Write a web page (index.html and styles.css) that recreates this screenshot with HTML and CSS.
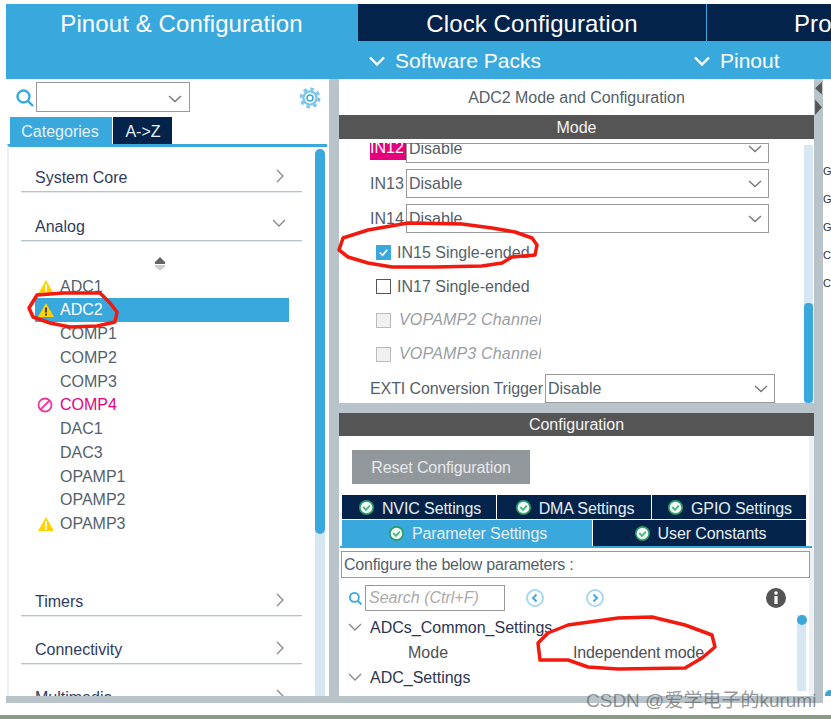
FILE: index.html
```html
<!DOCTYPE html>
<html lang="en">
<head>
<meta charset="utf-8">
<title>ADC2 Mode and Configuration</title>
<link rel="stylesheet" href="styles.css">
</head>
<body>
<div class="app">
  <header class="head">
    <nav class="main-tabs">
      <div class="main-tab t1 on">Pinout &amp; Configuration</div>
      <div class="main-tab t2">Clock Configuration</div>
      <div class="main-tab t3">Proj</div>
    </nav>
    <div class="sub-bar">
      <div class="sub s1"><svg class="sub-i" viewBox="0 0 16 10"><path d="M1 1.5l7 7 7-7"/></svg>Software Packs</div>
      <div class="sub s2"><svg class="sub-i" viewBox="0 0 16 10"><path d="M1 1.5l7 7 7-7"/></svg>Pinout</div>
    </div>
  </header>
  <div class="work">
    <aside class="left">
      <div class="finder">
        <svg class="lens" viewBox="0 0 20 20"><circle cx="8.5" cy="8.5" r="6"/><path d="M13 13l5 5"/></svg>
        <div class="combo"><svg class="chev" viewBox="0 0 14 8"><path d="M1 1l6 5.5L13 1"/></svg></div>
        <svg class="gear" viewBox="0 0 22 22"><circle class="g1" cx="11" cy="11" r="9"/><circle class="g2" cx="11" cy="11" r="6.6"/><circle class="g3" cx="11" cy="11" r="3"/></svg>
      </div>
      <div class="cat-tabs"><div class="cat on">Categories</div><div class="cat az">A-&gt;Z</div></div>
      <div class="tree">
        <div class="tree-in">
          <div class="acc first"><span>System Core</span><svg class="ar" viewBox="0 0 8 14"><path d="M1 1l6 6-6 6"/></svg></div>
          <div class="acc second"><span>Analog</span><svg class="ad" viewBox="0 0 14 8"><path d="M1 1l6 6 6-6"/></svg></div>
          <div class="sorter"><svg viewBox="0 0 10 14"><path class="su" d="M5 0l5 5v2H0V5z"/><path class="sd" d="M0 8h10v1.5L5 14 0 9.500z"/></svg></div>
          <ul class="items">
            <li><svg class="warn" viewBox="0 0 16 14"><path d="M8 0l8 14H0z"/><rect class="w" x="7" y="4.5" width="2" height="5"/><rect class="w" x="7" y="10.5" width="2" height="2"/></svg>ADC1</li>
            <li class="sel"><svg class="warn" viewBox="0 0 16 14"><path d="M8 0l8 14H0z"/><rect class="d" x="7" y="4.5" width="2" height="5"/><rect class="d" x="7" y="10.5" width="2" height="2"/></svg>ADC2</li>
            <li>COMP1</li>
            <li>COMP2</li>
            <li>COMP3</li>
            <li class="err"><svg class="ban" viewBox="0 0 16 16"><circle cx="8" cy="8" r="6.5"/><path d="M3.500 12.500l9-9"/></svg>COMP4</li>
            <li>DAC1</li>
            <li>DAC3</li>
            <li>OPAMP1</li>
            <li>OPAMP2</li>
            <li><svg class="warn" viewBox="0 0 16 14"><path d="M8 0l8 14H0z"/><rect class="w" x="7" y="4.5" width="2" height="5"/><rect class="w" x="7" y="10.5" width="2" height="2"/></svg>OPAMP3</li>
          </ul>
          <div class="acc timers"><span>Timers</span><svg class="ar" viewBox="0 0 8 14"><path d="M1 1l6 6-6 6"/></svg></div>
          <div class="acc conn"><span>Connectivity</span><svg class="ar" viewBox="0 0 8 14"><path d="M1 1l6 6-6 6"/></svg></div>
          <div class="acc multi"><span>Multimedia</span><svg class="ar" viewBox="0 0 8 14"><path d="M1 1l6 6-6 6"/></svg></div>
        </div>
        <div class="vbar"><div class="thumb"></div></div>
      </div>
    </aside>
    <main class="center">
      <div class="pane-title">ADC2 Mode and Configuration</div>
      <div class="dark-bar">Mode</div>
      <section class="mode">
        <div class="mode-in">
          <div class="m-row clipped"><label class="pin pin-err">IN12</label><div class="sel-box">Disable<svg class="chev" viewBox="0 0 14 8"><path d="M1 1l6 5.500L13 1"/></svg></div></div>
          <div class="m-row r13"><label class="pin">IN13</label><div class="sel-box">Disable<svg class="chev" viewBox="0 0 14 8"><path d="M1 1l6 5.500L13 1"/></svg></div></div>
          <div class="m-row r14"><label class="pin">IN14</label><div class="sel-box">Disable<svg class="chev" viewBox="0 0 14 8"><path d="M1 1l6 5.500L13 1"/></svg></div></div>
          <div class="c-row on-row"><span class="box checked"><svg viewBox="0 0 14 14"><path d="M3 7l3 3 5-6"/></svg></span>IN15 Single-ended</div>
          <div class="c-row on-row"><span class="box"></span>IN17 Single-ended</div>
          <div class="c-row off"><span class="box"></span><em>VOPAMP2 Channel</em></div>
          <div class="c-row off"><span class="box"></span><em>VOPAMP3 Channel</em></div>
          <div class="exti"><span>EXTI Conversion Trigger</span><div class="sel-box">Disable<svg class="chev" viewBox="0 0 14 8"><path d="M1 1l6 5.500L13 1"/></svg></div></div>
        </div>
        <div class="mbar"><div class="mthumb"></div></div>
      </section>
      <div class="split"></div>
      <div class="dark-bar cfg">Configuration</div>
      <section class="config">
        <div class="reset">Reset Configuration</div>
        <div class="tabs-a">
          <div class="tab"><svg class="ok" viewBox="0 0 16 16"><circle class="o1" cx="8" cy="8" r="8"/><circle class="o2" cx="8" cy="8" r="6.2"/><path d="M4.500 7.500l3 3 4-4.500"/></svg>NVIC Settings</div>
          <div class="tab"><svg class="ok" viewBox="0 0 16 16"><circle class="o1" cx="8" cy="8" r="8"/><circle class="o2" cx="8" cy="8" r="6.2"/><path d="M4.500 7.500l3 3 4-4.500"/></svg>DMA Settings</div>
          <div class="tab"><svg class="ok" viewBox="0 0 16 16"><circle class="o1" cx="8" cy="8" r="8"/><circle class="o2" cx="8" cy="8" r="6.2"/><path d="M4.500 7.500l3 3 4-4.500"/></svg>GPIO Settings</div>
        </div>
        <div class="tabs-b">
          <div class="tab active"><svg class="ok" viewBox="0 0 16 16"><circle class="o1" cx="8" cy="8" r="8"/><circle class="o2" cx="8" cy="8" r="6.2"/><path d="M4.500 7.500l3 3 4-4.500"/></svg>Parameter Settings</div>
          <div class="tab user"><svg class="ok" viewBox="0 0 16 16"><circle class="o1" cx="8" cy="8" r="8"/><circle class="o2" cx="8" cy="8" r="6.2"/><path d="M4.500 7.500l3 3 4-4.500"/></svg>User Constants</div>
        </div>
        <div class="blue-line"></div>
        <div class="hint">Configure the below parameters :</div>
        <div class="tool">
          <svg class="lens small" viewBox="0 0 20 20"><circle cx="8.500" cy="8.500" r="6"/><path d="M13 13l5 5"/></svg>
          <div class="search">Search (Ctrl+F)</div>
          <svg class="nav n1" viewBox="0 0 18 18"><circle cx="9" cy="9" r="8"/><path d="M10.500 5.500L7 9l3.500 3.500"/></svg>
          <svg class="nav n2" viewBox="0 0 18 18"><circle cx="9" cy="9" r="8"/><path d="M7.500 5.500L11 9l-3.500 3.500"/></svg>
          <svg class="info" viewBox="0 0 20 20"><circle cx="10" cy="10" r="10"/><rect x="8.400" y="8" width="3.200" height="8"/><circle class="dot" cx="10" cy="5" r="1.800"/></svg>
        </div>
        <div class="params">
          <div class="p-group"><svg class="ad" viewBox="0 0 14 8"><path d="M1 1l6 6 6-6"/></svg>ADCs_Common_Settings</div>
          <div class="p-row"><span class="p-name">Mode</span><span class="p-val">Independent mode</span></div>
          <div class="p-group"><svg class="ad" viewBox="0 0 14 8"><path d="M1 1l6 6 6-6"/></svg>ADC_Settings</div>
          <div class="pbar"><div class="pknob"></div></div>
        </div>
      </section>
    </main>
    <div class="gutter"><svg class="grip" viewBox="0 0 7 34"><path d="M7 0v13L0 6.500zM0 18l7 8-7 8z"/></svg></div>
    <div class="far"><span>G</span><span>G</span><span>G</span><span>C</span><span>C.</span><i class="far-knob"></i></div>
  </div>
  <div class="base"></div>
  <div class="floor"></div>
</div>
<svg class="marks" viewBox="0 0 831 719">
  <path d="M37 295L63 293 100 293 110 303 117 312 115 322 97 326 70 327 50 323 33 317 29 308z"/>
  <path d="M339 250L343 238 368 230 408 223 462 224 492 228 515 232 532 238 537 245 535 255 512 257 502 263 482 266 435 267 392 267 368 263 348 257z"/>
  <path d="M548 633L568 625 618 618 652 617 685 625 712 635 715 647 702 658 685 668 618 669 588 667 568 660 540 660 538 643z"/>
</svg>
<div class="wm">CSDN @爱学电子的kurumi</div>
</body>
</html>
```
FILE: styles.css
```css
*{box-sizing:border-box}
html,body{margin:0;padding:0;height:100%;overflow:hidden;background:#fff}
body{position:relative;font-family:"Liberation Sans",Arial,sans-serif;font-size:16px;color:#555f6b}
.app{width:831px;height:719px;display:flex;flex-direction:column;padding:4px 0 0 6px;position:relative}
.head{height:75px;flex:none;background:#39a8dc}
.main-tabs{display:flex;height:37px}
.main-tab{font-size:24px;letter-spacing:.1px;line-height:39px;color:#fff;text-align:center;background:#03234b;white-space:nowrap;overflow:hidden}
.t1{width:351px;background:#39a8dc}
.t2{width:348px;margin-left:1px}
.t3{flex:1;margin-left:1px;text-align:left;padding-left:87px}
.sub-bar{position:relative;height:38px;display:flex;color:#fff;font-size:21px}
.sub{display:flex;align-items:center;height:38px;padding-top:2px}
.s1{margin-left:363px;width:325px}
.sub-i{width:16px;height:10px;margin-right:10px;fill:none;stroke:#fff;stroke-width:2.4}
.work{flex:none;height:617px;display:flex;background:#b8c4ca}
.left{width:323px;flex:none;display:flex;flex-direction:column;background:#fff}
.finder{height:38px;display:flex;align-items:center;padding:0 0 1px 9px;position:relative}
.lens{width:20px;height:20px;fill:none;stroke:#39a8dc;stroke-width:2.4}
.combo{width:154px;height:30px;margin:-1px 0 0 1px;border:1px solid #999;position:relative}
.combo .chev{position:absolute;right:7px;top:12px}
.chev{width:14px;height:8px;fill:none;stroke:#777;stroke-width:1.4}
.gear{width:22px;height:22px;margin-left:109px;fill:none;stroke:#7cc6ea}
.g1{stroke-width:3;stroke-dasharray:3.500 3.570}
.g2{stroke-width:2.400}
.g3{stroke-width:1.600;stroke:#39a8dc}
.cat-tabs{display:flex;height:27px;padding-left:4px;gap:1px}
.cat{font-size:16px;line-height:28px;width:102px;text-align:center;color:#e6f2f8;background:#39a8dc;padding:1px 2px 0 0}
.az{width:59px;background:#03234b;padding:1px 0 0 1px}
.tree{flex:none;height:552px;border-top:3px solid #39a8dc;margin-left:1px;width:320px;display:flex;position:relative;overflow:hidden;border-left:2px solid #eef1f4}
.tree-in{width:306px;flex:none;height:549px;overflow:hidden;padding:0 13px 0 12px;background:#fff}
.acc{display:flex;justify-content:space-between;align-items:center;height:26px;border-bottom:1px solid #b8c4ca;color:#2f3c60;padding:0 16px 2px 14px;box-shadow:0 1px 0 #e6ebf0}
.acc.first{margin-top:19px}
.acc.second{margin-top:23px}
.acc.timers{margin-top:54.500px}
.acc.conn{margin-top:22px}
.acc.multi{margin-top:22px}
.ar{width:8px;height:14px;margin:-3px 2px 0 0;fill:none;stroke:#888;stroke-width:1.3}
.ad{width:14px;height:8px;margin-top:-7px;fill:none;stroke:#888;stroke-width:1.3}
.sorter{height:14px;margin-top:16px;padding-left:134px}
.sorter svg{display:block;width:10px;height:14px}
.su{fill:#666}.sd{fill:#ccc}
.items{list-style:none;margin:3.500px 0 0;padding:0}
.items li{height:23.750px;line-height:23.750px;padding-left:39px;position:relative;white-space:nowrap}
.items li.sel{background:#39a8dc;color:#fff;margin-left:14px;width:254px;padding-left:25px}
.items li.err{color:#e6007e}
.warn{position:absolute;left:17px;top:5px;width:16px;height:14px;fill:#ffd200}
.sel .warn{left:3px}
.warn .w{fill:#fff}.warn .d{fill:#444}
.ban{position:absolute;left:16px;top:4px;width:16px;height:16px;fill:none;stroke:#ec3a9c;stroke-width:1.800}
.vbar{width:10px;margin:2px 0 0;background:#d7e6f3;border-radius:5px 5px 0 0;height:547px}
.thumb{height:385px;background:#39a8dc;border-radius:5px}
.center{width:475px;flex:none;margin-left:10px;display:flex;flex-direction:column;position:relative}
.pane-title{height:36px;line-height:37px;text-align:center;background:#fff;letter-spacing:-.05px}
.dark-bar{height:24px;line-height:25px;text-align:center;color:#f4f4f4;background:#545554;flex:none}
.mode{height:264px;flex:none;background:#fff;position:relative;overflow:hidden;padding-top:4px}
.mode-in{width:464px;height:260px;overflow:hidden}
.m-row{display:flex;align-items:center;height:29px;margin:0 0 6px 31px}
.clipped{height:20px;align-items:flex-start}
.clipped .sel-box{height:20px;line-height:10px;align-items:flex-start}
.clipped .chev{margin-top:1px}
.pin{width:36px;flex:none;height:16px;line-height:16px;white-space:nowrap}
.pin-err{background:#e6007e;color:#fff;height:17px;line-height:10px}
.r14{margin-bottom:2px}
.sel-box{width:363px;height:29px;border:1px solid #999;display:flex;align-items:center;justify-content:space-between;padding:0 6px 0 2px}
.c-row{display:flex;align-items:center;height:34px;margin-left:37px;white-space:nowrap}
.on-row{padding-top:1px}
.box{width:15px;height:15px;border:1px solid #555;margin-right:6px;flex:none;display:block}
.checked{background:#39a8dc;border-color:#39a8dc}
.checked svg{display:block;width:13px;height:13px;fill:none;stroke:#fff;stroke-width:1.800}
.off{color:#9a9ea3}
.off .box{background:#eef0f2;border-color:#bbb}
.off em{display:block;width:142px;overflow:hidden;margin-left:2px;letter-spacing:.18px}
.exti{display:flex;align-items:center;margin:3px 0 0 31px;white-space:nowrap}
.exti span{width:175px;flex:none;letter-spacing:-.1px}
.exti .sel-box{width:230px}
.mbar{position:absolute;right:1px;top:6px;bottom:0;width:9px;background:#d7e6f3}
.mthumb{position:absolute;left:0;right:0;top:158px;bottom:0;background:#39a8dc;border-radius:4px}
.split{height:10px;flex:none}
.dark-bar.cfg{height:23px;line-height:23px}
.config{flex:1;background:#fff;border-right:5px solid #eef1f4;display:flex;flex-direction:column;position:relative}
.reset{width:178px;height:34px;margin:14px 0 0 13px;background:#92979c;color:#e6e8ea;text-align:center;line-height:36px;letter-spacing:-.1px}
.tabs-a{display:flex;margin:11px 0 0 3px;width:464px;gap:1px}
.tabs-a .tab{flex:1;padding:3px 0 0 2px}
.tabs-b{display:flex;margin:1px 0 0 3px;width:464px;gap:1px}
.tab{height:24px;background:#03234b;color:#e9eef2;display:flex;align-items:center;justify-content:center;white-space:nowrap;letter-spacing:-.1px}
.tabs-b .tab{height:26px;padding:2px 0 0 2px}
.tabs-b .tab.active{background:#39a8dc;width:250px;flex:none}
.user{flex:1}
.ok{width:15px;height:15px;margin:-2px 8px 0 0;fill:none;flex:none}
.o1{fill:#2a9c66}.o2{fill:#f2fbf6}
.ok path{fill:none;stroke:#4fb585;stroke-width:2}
.blue-line{height:2px;margin:0 -3px 0 1px;background:#39a8dc}
.hint{height:27px;line-height:26px;border:1px solid #999;margin:3px -1px 0 2px;padding-left:2px;white-space:nowrap;letter-spacing:-.22px}
.tool{height:38px;display:flex;align-items:center;position:relative;padding:2px 0 0 9px}
.lens.small{width:15px;height:15px}
.search{width:140px;height:26px;border:1px solid #999;margin-left:2px;line-height:24px;padding-left:3px;font-style:italic;color:#aaa}
.nav{width:18px;height:18px;fill:none;stroke:#39a8dc;stroke-width:1.800;margin-left:21px}
.nav circle{stroke:#a6d8f0;stroke-width:2}
.n2{margin-left:42px}
.info{width:20px;height:20px;margin-left:162px;fill:#555}
.info rect{fill:#fff}.dot{fill:#fff}
.params{position:relative;flex:1;overflow:hidden;margin-top:-1px}
.p-group{height:25px;line-height:25px;color:#2c3550;padding-left:31px;position:relative;white-space:nowrap}
.p-group .ad{position:absolute;left:9px;top:8px;margin:0}
.p-row{height:25px;line-height:25px;display:flex;color:#4f4f55}
.p-name{width:234px;padding-left:69px}
.p-val{letter-spacing:-.15px}
.pbar{position:absolute;left:458px;top:0;width:9px;bottom:5px;background:#d7e6f3}
.pknob{width:10px;height:10px;border-radius:50%;background:#39a8dc}
.gutter{width:9px;flex:none;position:relative}
.grip{position:absolute;left:1px;top:3px;width:7px;height:33px;fill:#555}
.far{flex:1;font-size:11px;color:#333;background:#fff;display:flex;flex-direction:column;padding:85px 0 0;line-height:14px;gap:14px;overflow:hidden;position:relative}
.far span{display:block}
.far-knob{position:absolute;left:2px;top:611px;width:10px;height:10px;border-radius:50%;background:#39a8dc}
.base{height:7px;width:817px;flex:none;background:#b8c4ca}
.floor{position:absolute;left:0;right:0;bottom:0;height:4px;background:#8a9a85}
.marks{position:absolute;left:0;top:0;width:831px;height:719px;pointer-events:none;fill:none;stroke:#f2190f;stroke-width:3.500;stroke-linejoin:round}
.wm{position:absolute;left:586px;top:685px;font-size:19px;color:rgba(80,80,80,.6);white-space:nowrap;font-family:"Liberation Sans","Noto Sans CJK SC",sans-serif}
```
